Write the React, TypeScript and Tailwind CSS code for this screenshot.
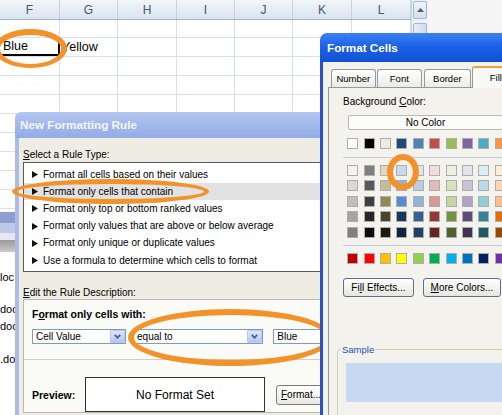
import type { ReactNode } from "react";

const columns = [
  { letter: "F", w: "w-[60px]" },
  { letter: "G", w: "w-[58px]" },
  { letter: "H", w: "w-[59px]" },
  { letter: "I", w: "w-[58px]" },
  { letter: "J", w: "w-[58px]" },
  { letter: "K", w: "w-[59px]" },
  { letter: "L", w: "w-[59px]" },
];

const rules = [
  "Format all cells based on their values",
  "Format only cells that contain",
  "Format only top or bottom ranked values",
  "Format only values that are above or below average",
  "Format only unique or duplicate values",
  "Use a formula to determine which cells to format",
];

const themeRow = ["bg-[#ffffff]", "bg-[#000000]", "bg-[#eeece1]", "bg-[#1f497d]", "bg-[#4f81bd]", "bg-[#c0504d]", "bg-[#9bbb59]", "bg-[#8064a2]", "bg-[#4bacc6]", "bg-[#f79646]"];

const tintRows = [
  ["bg-[#f2f2f2]", "bg-[#7f7f7f]", "bg-[#ddd9c3]", "bg-[#c6d9f0]", "bg-[#dbe5f1]", "bg-[#f2dcdb]", "bg-[#ebf1dd]", "bg-[#e5e0ec]", "bg-[#dbeef3]", "bg-[#fdeada]"],
  ["bg-[#d8d8d8]", "bg-[#595959]", "bg-[#c4bd97]", "bg-[#8db3e2]", "bg-[#b8cce4]", "bg-[#e5b9b7]", "bg-[#d7e3bc]", "bg-[#ccc1d9]", "bg-[#b7dde8]", "bg-[#fbd5b5]"],
  ["bg-[#bfbfbf]", "bg-[#3f3f3f]", "bg-[#938953]", "bg-[#548dd4]", "bg-[#95b3d7]", "bg-[#d99694]", "bg-[#c3d69b]", "bg-[#b2a2c7]", "bg-[#92cddc]", "bg-[#fac08f]"],
  ["bg-[#a5a5a5]", "bg-[#262626]", "bg-[#494429]", "bg-[#17365d]", "bg-[#366092]", "bg-[#953734]", "bg-[#76923c]", "bg-[#5f497a]", "bg-[#31859b]", "bg-[#e36c09]"],
  ["bg-[#7f7f7f]", "bg-[#0c0c0c]", "bg-[#1d1b10]", "bg-[#0f243e]", "bg-[#244061]", "bg-[#632423]", "bg-[#4f6128]", "bg-[#3f3151]", "bg-[#205867]", "bg-[#974806]"],
];

const standardRow = ["bg-[#c00000]", "bg-[#ff0000]", "bg-[#ffc000]", "bg-[#ffff00]", "bg-[#92d050]", "bg-[#00b050]", "bg-[#00b0f0]", "bg-[#0070c0]", "bg-[#002060]", "bg-[#7030a0]"];

function Swatches({ colors }: { colors: string[] }) {
  return (
    <div className="ml-[4.2px] flex gap-x-[5.4px]">
      {colors.map((c, i) => (
        <div key={i} className={`h-[11px] w-[11px] shrink-0 border border-[#adadad] ${c}`} />
      ))}
    </div>
  );
}

function Sheet() {
  return (
    <div className="flex h-full">
      <div className="flex w-[411px] shrink-0 flex-col">
        <div className="flex h-[20px] shrink-0 border-b border-[#9eb6ce] bg-linear-to-b from-[#f3f6fa] to-[#dae3ee]">
          {columns.map(c => (
            <div key={c.letter} className={`${c.w} flex items-center justify-center border-r border-[#c5d2e0] text-[12px] text-[#44556d]`}>
              {c.letter}
            </div>
          ))}
        </div>
        {Array.from({ length: 21 }).map((_, r) => (
          <div key={r} className={`flex shrink-0 border-b border-[#d9dfe9] ${r === 0 ? "h-[18px]" : "h-[19px]"}`}>
            {columns.map((c, ci) => (
              <div
                key={c.letter}
                className={`${c.w} flex items-center whitespace-nowrap text-[12.5px] ${
                  r === 1 && ci === 0 ? "border-b-2 border-r-2 border-black pl-[3px]" : "border-r border-[#d9dfe9] pl-[2px]"
                }`}
              >
                {r === 1 && ci === 0 ? "Blue" : r === 1 && ci === 1 ? "Yellow" : ""}
              </div>
            ))}
          </div>
        ))}
      </div>

      {/* scrollbar */}
      <div className="flex w-[17px] shrink-0 flex-col border-l border-[#c9d3e0] bg-[#eef2f8]">
        <div className="mx-px mt-px flex h-[18px] items-center justify-center rounded-[2px] border border-[#a6b6cd] bg-linear-to-b from-[#eef4fc] to-[#d2deee]">
          <svg width="7" height="4" viewBox="0 0 7 4">
            <path d="M0 4 L3.5 0 L7 4 Z" fill="#4d5a6e" />
          </svg>
        </div>
        <div className="mx-px mt-[4px] h-[30px] rounded-[2px] border border-[#a6b6cd] bg-linear-to-r from-[#e6edf7] to-[#cfdbeb]" />
      </div>

      <div className="flex-1 bg-[#f5f5f5]" />
    </div>
  );
}

function OtherWindow() {
  return (
    <div className="absolute left-0 top-[212px] z-[2] flex h-[203px] w-[15px] flex-col overflow-hidden">
      <div className="h-[11px] shrink-0 bg-[#8d9fcf]" />
      <div className="h-[10px] shrink-0 bg-[#bac8ea]" />
      <div className="h-[7px] shrink-0 bg-[#e7e8ee]" />
      <div className="h-[12px] shrink-0 bg-linear-to-b from-[#9a9a9a] to-[#cacaca]" />
      <div className="flex-1 whitespace-nowrap bg-white pt-[19px] text-[11px] leading-[13px]">
        <div>loc</div>
        <div className="mt-[19px]">doc</div>
        <div className="mt-[4px]">doc</div>
        <div className="mt-[20px]">.do</div>
      </div>
    </div>
  );
}

function Combo({ className, children }: { className: string; children: ReactNode }) {
  return (
    <div className={`${className} flex border border-[#7f9db9] bg-white`}>
      <span className="flex-1 pl-[3px] leading-[13px]">{children}</span>
      <div className="flex w-[15px] items-center justify-center rounded-[1px] border border-[#b5c9f4] bg-linear-to-b from-[#dde7fd] to-[#b2c7f5]">
        <svg width="7" height="5" viewBox="0 0 7 5">
          <path d="M0.8 0.8 L3.5 3.7 L6.2 0.8" stroke="#4d6185" strokeWidth="1.7" fill="none" />
        </svg>
      </div>
    </div>
  );
}

function NewRuleDialog() {
  return (
    <div className="absolute left-[15px] top-[112px] z-[3] flex h-[310px] w-[320px] flex-col overflow-hidden rounded-tl-[6px]">
      <div className="flex h-[26px] shrink-0 items-center bg-linear-to-b from-[#b4c6f0] to-[#93abe6] pl-[5px] text-[11.7px] font-bold text-[#f3f6fd]">
        New Formatting Rule
      </div>
      <div className="flex-1 border-l-[4px] border-[#a9bbe6] bg-[#eeece3] pl-[4px] pt-[11px] text-[10px] leading-[12px]">
        <div>
          <span className="underline">S</span>elect a Rule Type:
        </div>
        <div className="mt-px h-[110px] w-[320px] border border-[#5a5a5a] bg-white pt-[3px]">
          {rules.map((r, i) => (
            <div key={r} className={`flex h-[17.2px] items-center whitespace-nowrap pl-[8px] ${i === 1 ? "bg-[#e2e2e2]" : ""}`}>
              <svg width="6" height="7" viewBox="0 0 6 7" className="mr-[5px] shrink-0">
                <path d="M0 0 L6 3.5 L0 7 Z" fill="#111" />
              </svg>
              <span>{r}</span>
            </div>
          ))}
        </div>

        <div className="mt-[15px]">
          <span className="underline">E</span>dit the Rule Description:
        </div>
        <div className="w-[320px] border border-[#b9b9b2] bg-[#fafaf7] pt-[8px]">
          <div className="pl-[8px] text-[10.5px] font-bold leading-[13px]">
            F<span className="underline">o</span>rmat only cells with:
          </div>
          <div className="mt-[8px] flex h-[15px] pl-[8px]">
            <Combo className="w-[96px]">Cell Value</Combo>
            <Combo className="ml-[7px] w-[133px]">equal to</Combo>
            <div className="ml-[10px] w-[70px] border border-[#7f9db9] bg-white pl-[3px] leading-[13px]">Blue</div>
          </div>
          <div className="mt-[15px] border-t border-[#cfcfc8]" />
          <div className="mt-[17px] flex items-center pl-[8px]">
            <span className="w-[43px] text-[10.5px] font-bold">Preview:</span>
            <div className="ml-[10px] flex h-[35px] w-[180px] items-center justify-center border border-[#333] bg-white text-[12px]">
              No Format Set
            </div>
            <div className="ml-[11px] flex h-[20px] w-[64px] items-center rounded-[3px] border border-[#7b7b7b] bg-linear-to-b from-white to-[#e9e8e2] pl-[4px]">
              <span className="underline">F</span>ormat...
            </div>
          </div>
        </div>
      </div>
    </div>
  );
}

function Tab({ label, className }: { label: string; className: string }) {
  return (
    <div className={`${className} flex h-[18px] items-center justify-center rounded-t-[3px] border border-b-0 border-[#919b9c] bg-linear-to-b from-white to-[#ecebe5] text-[9.5px]`}>
      {label}
    </div>
  );
}

function FormatCellsDialog() {
  return (
    <div className="absolute left-[320px] top-[33px] z-[5] flex h-[390px] w-[200px] flex-col overflow-hidden rounded-tl-[7px]">
      <div className="flex h-[29px] shrink-0 items-center bg-linear-to-b from-[#3c80f4] via-[#1b5fe4] to-[#1152d6] pl-[7px] text-[11.7px] font-bold text-white">
        Format Cells
      </div>
      <div className="flex-1 border-l-[3px] border-[#2a52c6] bg-[#f3f2ec] pt-[4px] text-[10px] leading-[12px]">
        <div className="ml-[8px] flex h-[21px] items-end">
          <Tab label="Number" className="w-[46px]" />
          <Tab label="Font" className="ml-px w-[47px]" />
          <Tab label="Border" className="ml-[2px] w-[48px]" />
          <div className="relative z-10 -mb-px ml-px flex h-[22px] w-[50px] items-center justify-center rounded-t-[3px] border-x border-t-2 border-x-[#919b9c] border-t-[#f1a33f] bg-[#f8f8f5] text-[9.5px]">
            Fill
          </div>
        </div>
        <div className="ml-[5px] h-[330px] border-l border-t border-[#919b9c] pl-[14px] pt-[8px]">
          <div>
            Background <span className="underline">C</span>olor:
          </div>
          <div className="ml-[5px] mt-[7px] flex h-[15px] w-[155px] items-center justify-center rounded-[2px] border border-[#b9b9b4] bg-[#fbfbfa]">
            No Color
          </div>
          <div className="mt-[7.5px]">
            <Swatches colors={themeRow} />
          </div>
          <div className="mt-[8px] border-t border-[#c2cddd]" />
          <div className="mt-[7px] flex flex-col gap-y-[4.5px]">
            {tintRows.map((row, i) => (
              <Swatches key={i} colors={row} />
            ))}
          </div>
          <div className="mt-[7.5px] border-t border-[#c2cddd]" />
          <div className="mt-[6.5px]">
            <Swatches colors={standardRow} />
          </div>
          <div className="mt-[14.5px] flex">
            <div className="flex h-[19px] w-[71px] items-center justify-center rounded-[3px] border border-[#5f6f86] bg-linear-to-b from-white to-[#e6e5de]">
              Fi<span className="underline">l</span>l Effects...
            </div>
            <div className="ml-[9px] flex h-[19px] w-[78px] items-center justify-center rounded-[3px] border border-[#5f6f86] bg-linear-to-b from-white to-[#e6e5de]">
              <span className="underline">M</span>ore Colors...
            </div>
          </div>
          <fieldset className="-ml-[6px] mt-[47px] h-[75px] w-[180px] rounded-[3px] border border-[#d0d0bf] pl-[3px] pt-[8px]">
            <legend className="px-px text-[9.5px] leading-[11px] text-[#1d50b0]">Sample</legend>
            <div className="ml-[5px] h-[39px] w-[165px] bg-[#c6d9f1]" />
          </fieldset>
        </div>
      </div>
    </div>
  );
}

export default function App() {
  return (
    <div className="relative h-[415px] w-[502px] overflow-hidden bg-white font-['Liberation_Sans',Arial,sans-serif] text-black">
      <Sheet />
      {/* annotation around the Blue cell */}
      <div className="absolute left-[-6px] top-[29px] z-[1] h-[39px] w-[73px] rounded-[50%] border-[6px] border-b-[4px] border-[#f29229]" />
      <OtherWindow />
      <NewRuleDialog />
      <div className="absolute left-[12px] top-[179px] z-[4] h-[25px] w-[197px] rounded-[50%] border-[5px] border-[#f29229]" />
      <div className="absolute left-[128px] top-[309px] z-[4] h-[57px] w-[205px] rounded-[50%] border-[6px] border-[#f29229]" />
      <FormatCellsDialog />
      <div className="absolute left-[387px] top-[154px] z-[6] h-[36px] w-[32px] rounded-[50%] border-[6px] border-[#f29229]" />
    </div>
  );
}
